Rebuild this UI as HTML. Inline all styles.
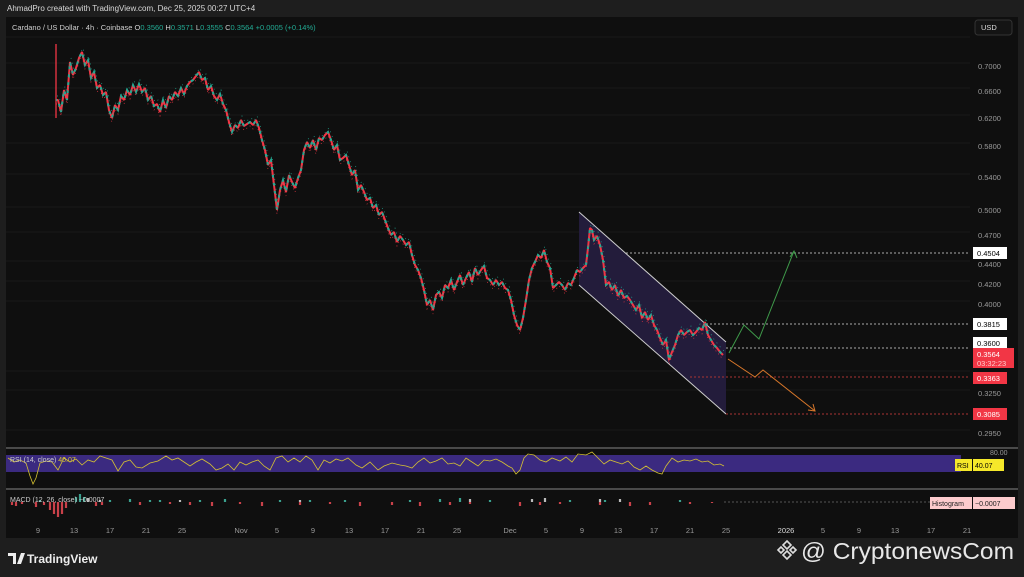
<!DOCTYPE html>
<html><head><meta charset="utf-8"><style>
body{margin:0;width:1024px;height:577px;background:#1e1e1e;overflow:hidden;font-family:"Liberation Sans",sans-serif}
svg{position:absolute;left:0;top:0}
</style></head><body>
<svg width="1024" height="577" xmlns="http://www.w3.org/2000/svg" xmlns:xlink="http://www.w3.org/1999/xlink" font-family="Liberation Sans, sans-serif">
<defs>
<polyline id="p" fill="none" points="56,100 58,100 61,112 64,90 67,100 70,62 73,75 76,68 79,58 82,52 85,65 88,60 91,78 94,72 97,88 100,85 103,95 106,92 109,110 112,118 115,105 118,110 121,96 124,100 127,90 130,95 133,85 136,92 139,84 142,92 145,88 148,100 151,96 154,106 157,104 160,112 163,100 166,108 169,96 172,100 175,92 178,96 181,88 184,94 187,86 190,82 193,80 196,76 199,72 202,80 205,78 208,90 211,86 214,96 217,100 220,94 223,104 226,110 229,122 232,132 235,125 238,128 241,120 244,126 247,124 250,122 253,125 256,120 259,128 262,140 265,150 268,165 271,160 274,185 277,210 280,190 283,180 286,192 289,175 292,182 295,188 298,178 301,170 304,150 307,142 310,148 313,140 316,150 319,138 322,140 325,135 328,132 331,140 334,150 337,145 340,160 343,158 346,155 349,165 352,175 355,170 358,190 361,185 364,192 367,200 370,198 373,208 376,205 379,215 382,212 385,220 388,228 391,235 394,232 397,242 400,236 403,240 406,245 409,242 412,255 415,265 418,270 421,278 424,290 427,305 430,300 433,310 436,295 439,292 442,298 445,285 448,288 451,280 454,290 457,282 460,275 463,285 466,278 469,272 472,282 475,268 478,275 481,270 484,266 487,278 490,280 493,285 496,280 499,285 502,282 505,288 508,290 511,300 514,315 517,325 520,330 523,318 526,300 529,280 532,268 535,262 538,255 541,258 544,250 547,262 550,268 553,288 556,285 559,282 562,285 565,290 568,283 571,285 574,278 577,270 580,272 583,268 586,265 588,248 590,228 592,230 594,240 597,236 600,245 603,260 606,285 609,282 612,290 615,285 618,296 621,290 624,298 627,296 630,300 633,305 636,310 639,305 642,318 645,312 648,320 651,315 654,325 657,330 660,338 663,345 666,340 669,360 672,352 675,345 678,335 681,330 684,335 687,332 690,330 693,335 696,332 699,328 702,330 705,322 708,335 711,340 714,345 717,348 720,352 723,355"/>
</defs>
<rect x="0" y="0" width="1024" height="577" fill="#1e1e1e"/>
<rect x="6" y="17" width="1012" height="521" fill="#0f0f0f"/>
<text x="7" y="11" font-size="8" fill="#d8d8d8">AhmadPro created with TradingView.com, Dec 25, 2025 00:27 UTC+4</text>
<g stroke="#191919" stroke-width="1">
<line x1="6" y1="37" x2="970" y2="37"/><line x1="6" y1="63" x2="970" y2="63"/><line x1="6" y1="88" x2="970" y2="88"/><line x1="6" y1="115" x2="970" y2="115"/><line x1="6" y1="143" x2="970" y2="143"/><line x1="6" y1="174" x2="970" y2="174"/><line x1="6" y1="207" x2="970" y2="207"/><line x1="6" y1="232" x2="970" y2="232"/><line x1="6" y1="261" x2="970" y2="261"/><line x1="6" y1="281" x2="970" y2="281"/><line x1="6" y1="301" x2="970" y2="301"/><line x1="6" y1="371" x2="970" y2="371"/><line x1="6" y1="390" x2="970" y2="390"/><line x1="6" y1="430" x2="970" y2="430"/>
</g>
<text x="12" y="30" font-size="7.5" fill="#cfcfcf">Cardano / US Dollar · 4h · Coinbase  O<tspan fill="#22ab94">0.3560</tspan>  H<tspan fill="#22ab94">0.3571</tspan>  L<tspan fill="#22ab94">0.3555</tspan>  C<tspan fill="#22ab94">0.3564</tspan>  <tspan fill="#22ab94">+0.0005 (+0.14%)</tspan></text>
<rect x="975" y="20" width="37" height="15" rx="3" fill="#141414" stroke="#333"/>
<text x="981" y="30" font-size="7.5" fill="#ddd">USD</text>
<g font-size="7.5" fill="#9a9a9a">
<text x="978" y="69">0.7000</text><text x="978" y="94">0.6600</text><text x="978" y="121">0.6200</text><text x="978" y="149">0.5800</text><text x="978" y="180">0.5400</text><text x="978" y="213">0.5000</text><text x="978" y="238">0.4700</text><text x="978" y="267">0.4400</text><text x="978" y="287">0.4200</text><text x="978" y="307">0.4000</text><text x="978" y="396">0.3250</text><text x="978" y="436">0.2950</text>
</g>
<polygon points="579,212 726,342 726,414 579,285" fill="#231c3b"/>
<line x1="579" y1="212" x2="726" y2="342" stroke="#cfcfcf" stroke-width="1"/>
<line x1="579" y1="285" x2="726" y2="414" stroke="#cfcfcf" stroke-width="1"/>
<g stroke-dasharray="2,2" stroke-width="1">
<line x1="626" y1="253" x2="970" y2="253" stroke="#aaa"/>
<line x1="706" y1="324" x2="970" y2="324" stroke="#aaa"/>
<line x1="726" y1="348" x2="970" y2="348" stroke="#aaa"/>
<line x1="690" y1="377" x2="970" y2="377" stroke="#a33"/>
<line x1="726" y1="414" x2="970" y2="414" stroke="#a33"/>
</g>
<line x1="56" y1="44" x2="56" y2="118" stroke="#f23645" stroke-width="1.3"/>
<use xlink:href="#p" href="#p" stroke="#f23645" stroke-width="2" stroke-linejoin="bevel"/>
<use xlink:href="#p" href="#p" stroke="#22ab94" stroke-width="2" stroke-dasharray="3,5" stroke-dashoffset="2"/>
<use xlink:href="#p" href="#p" stroke="#f23645" stroke-width="0.7" stroke-dasharray="1,3" transform="translate(0,4)"/>
<use xlink:href="#p" href="#p" stroke="#22ab94" stroke-width="0.7" stroke-dasharray="1,4" transform="translate(1,-4)"/>
<polyline points="729,353 744,325 759,339 794,251" fill="none" stroke="#3f9a4a" stroke-width="1"/>
<polyline points="790,257 794,251 797,258" fill="none" stroke="#3f9a4a" stroke-width="1"/>
<polyline points="728,359 755,377 763,370 815,411" fill="none" stroke="#d8772a" stroke-width="1"/>
<polyline points="808,410 815,411 813,404" fill="none" stroke="#d8772a" stroke-width="1"/>
<rect x="973" y="247" width="34" height="12" fill="#fff"/><text x="977" y="256" font-size="7.5" fill="#000">0.4504</text>
<rect x="973" y="318" width="34" height="12" fill="#fff"/><text x="977" y="327" font-size="7.5" fill="#000">0.3815</text>
<rect x="973" y="337" width="34" height="12" fill="#fff"/><text x="977" y="346" font-size="7.5" fill="#000">0.3600</text>
<rect x="973" y="348" width="41" height="20" fill="#f23645"/><text x="977" y="357" font-size="7.5" fill="#fff">0.3564</text><text x="977" y="366" font-size="7.5" fill="#fcc">03:32:23</text>
<rect x="973" y="372" width="34" height="12" fill="#f23645"/><text x="977" y="381" font-size="7.5" fill="#fff">0.3363</text>
<rect x="973" y="408" width="34" height="12" fill="#f23645"/><text x="977" y="417" font-size="7.5" fill="#fff">0.3085</text>
<rect x="6" y="447" width="1012" height="2" fill="#4a4a4a"/>
<rect x="6" y="488" width="1012" height="2" fill="#4a4a4a"/>
<rect x="6" y="455" width="955" height="17" fill="#3b2a80"/>
<polyline fill="none" stroke="#d6c232" stroke-width="0.8" points="8,458 14,462 20,460 26,463 30,476 33,484 36,478 40,463 46,461 52,462 58,470 64,458 70,462 76,459 82,465 88,460 94,462 100,456 106,458 112,460 118,471 124,462 130,460 136,467 142,468 150,463 158,461 166,456 172,460 178,458 184,462 190,466 196,462 202,459 210,464 216,470 222,468 228,464 234,470 240,462 246,465 252,462 258,460 264,466 270,470 276,458 282,456 288,462 294,458 300,462 306,456 312,460 318,470 324,460 330,463 336,459 342,461 348,458 356,465 362,468 370,462 378,470 384,466 392,463 400,465 406,466 412,468 418,462 424,458 430,463 436,461 442,458 448,464 454,463 460,466 466,458 472,462 478,466 484,460 490,461 496,459 502,462 508,466 512,468 516,474 520,470 524,458 528,454 534,455 540,460 546,462 552,458 560,461 566,457 572,462 578,454 586,455 592,452 598,458 604,464 610,460 616,462 622,464 628,461 634,467 640,470 646,466 652,470 658,473 662,474 666,466 672,458 678,462 684,460 690,461 696,459 702,462 708,461 714,465 720,464 724,466"/>
<text x="10" y="462" font-size="7" fill="#ccc">RSI (14, close) <tspan fill="#d6c232">40.07</tspan></text>
<text x="990" y="455" font-size="7" fill="#999">80.00</text>
<rect x="955" y="459" width="17" height="12" fill="#f5e82a"/><text x="957" y="468" font-size="7" fill="#000">RSI</text>
<rect x="973" y="459" width="31" height="12" fill="#f5e82a"/><text x="975" y="468" font-size="7" fill="#000">40.07</text>
<path d="M12,502 V505 M16,502 V506 M22,502 V504 M36,502 V507 M44,502 V505 M50,502 V510 M54,502 V514 M58,502 V517 M62,502 V514 M66,502 V508 M96,502 V506 M102,502 V505 M140,502 V505 M170,502 V504 M190,502 V505 M212,502 V506 M240,502 V504 M262,502 V506 M300,502 V505 M330,502 V504 M360,502 V506 M392,502 V505 M420,502 V506 M450,502 V505 M470,502 V504 M520,502 V506 M540,502 V505 M560,502 V504 M600,502 V505 M630,502 V506 M650,502 V505 M690,502 V504 M712,502 V503" stroke="#c9414a" stroke-width="2.2" fill="none"/>
<path d="M40,502 V500 M76,502 V497 M80,502 V494 M84,502 V497 M110,502 V500 M130,502 V499 M150,502 V500 M160,502 V500 M200,502 V500 M225,502 V499 M280,502 V500 M310,502 V500 M345,502 V500 M410,502 V500 M440,502 V499 M460,502 V498 M490,502 V500 M570,502 V500 M605,502 V500 M680,502 V500" stroke="#3aa08e" stroke-width="2.2" fill="none"/>
<path d="M88,502 V498 M100,502 V500 M180,502 V500 M300,502 V500 M470,502 V499 M532,502 V499 M545,502 V498 M600,502 V499 M620,502 V499" stroke="#bbb" stroke-width="2.2" fill="none"/>
<line x1="724" y1="502" x2="930" y2="502" stroke="#555" stroke-dasharray="2,2"/>
<text x="10" y="502" font-size="7" fill="#ccc">MACD (12, 26, close) −0.0007</text>
<rect x="930" y="497" width="42" height="12" fill="#fccbcd"/><text x="932" y="506" font-size="7" fill="#222">Histogram</text>
<rect x="973" y="497" width="42" height="12" fill="#fccbcd"/><text x="975" y="506" font-size="7" fill="#222">−0.0007</text>
<g font-size="7.5" fill="#9a9a9a" text-anchor="middle">
<text x="38" y="533">9</text><text x="74" y="533">13</text><text x="110" y="533">17</text><text x="146" y="533">21</text><text x="182" y="533">25</text><text x="241" y="533">Nov</text><text x="277" y="533">5</text><text x="313" y="533">9</text><text x="349" y="533">13</text><text x="385" y="533">17</text><text x="421" y="533">21</text><text x="457" y="533">25</text><text x="510" y="533">Dec</text><text x="546" y="533">5</text><text x="582" y="533">9</text><text x="618" y="533">13</text><text x="654" y="533">17</text><text x="690" y="533">21</text><text x="726" y="533">25</text><text x="786" y="533" fill="#ddd">2026</text><text x="823" y="533">5</text><text x="859" y="533">9</text><text x="895" y="533">13</text><text x="931" y="533">17</text><text x="967" y="533">21</text>
</g>
<path d="M8,553 H16 V564 H13 V556 H8Z M17,564 L21,553 H25 L21,564Z" fill="#eee"/>
<text x="27" y="563" font-size="12" font-weight="bold" fill="#eee">TradingView</text>
<g transform="translate(787,550)" fill="none" stroke="#ddd" stroke-width="1.6">
<path d="M0,-9 L4,-5 L0,-1 L-4,-5Z M0,1 L4,5 L0,9 L-4,5Z M-9,0 L-6,-3 L-3,0 L-6,3Z M9,0 L6,-3 L3,0 L6,3Z"/>
</g>
<text x="801" y="559" font-size="23" fill="#e8e8e8" textLength="213" lengthAdjust="spacingAndGlyphs">@ CryptonewsCom</text>
</svg>
</body></html>
